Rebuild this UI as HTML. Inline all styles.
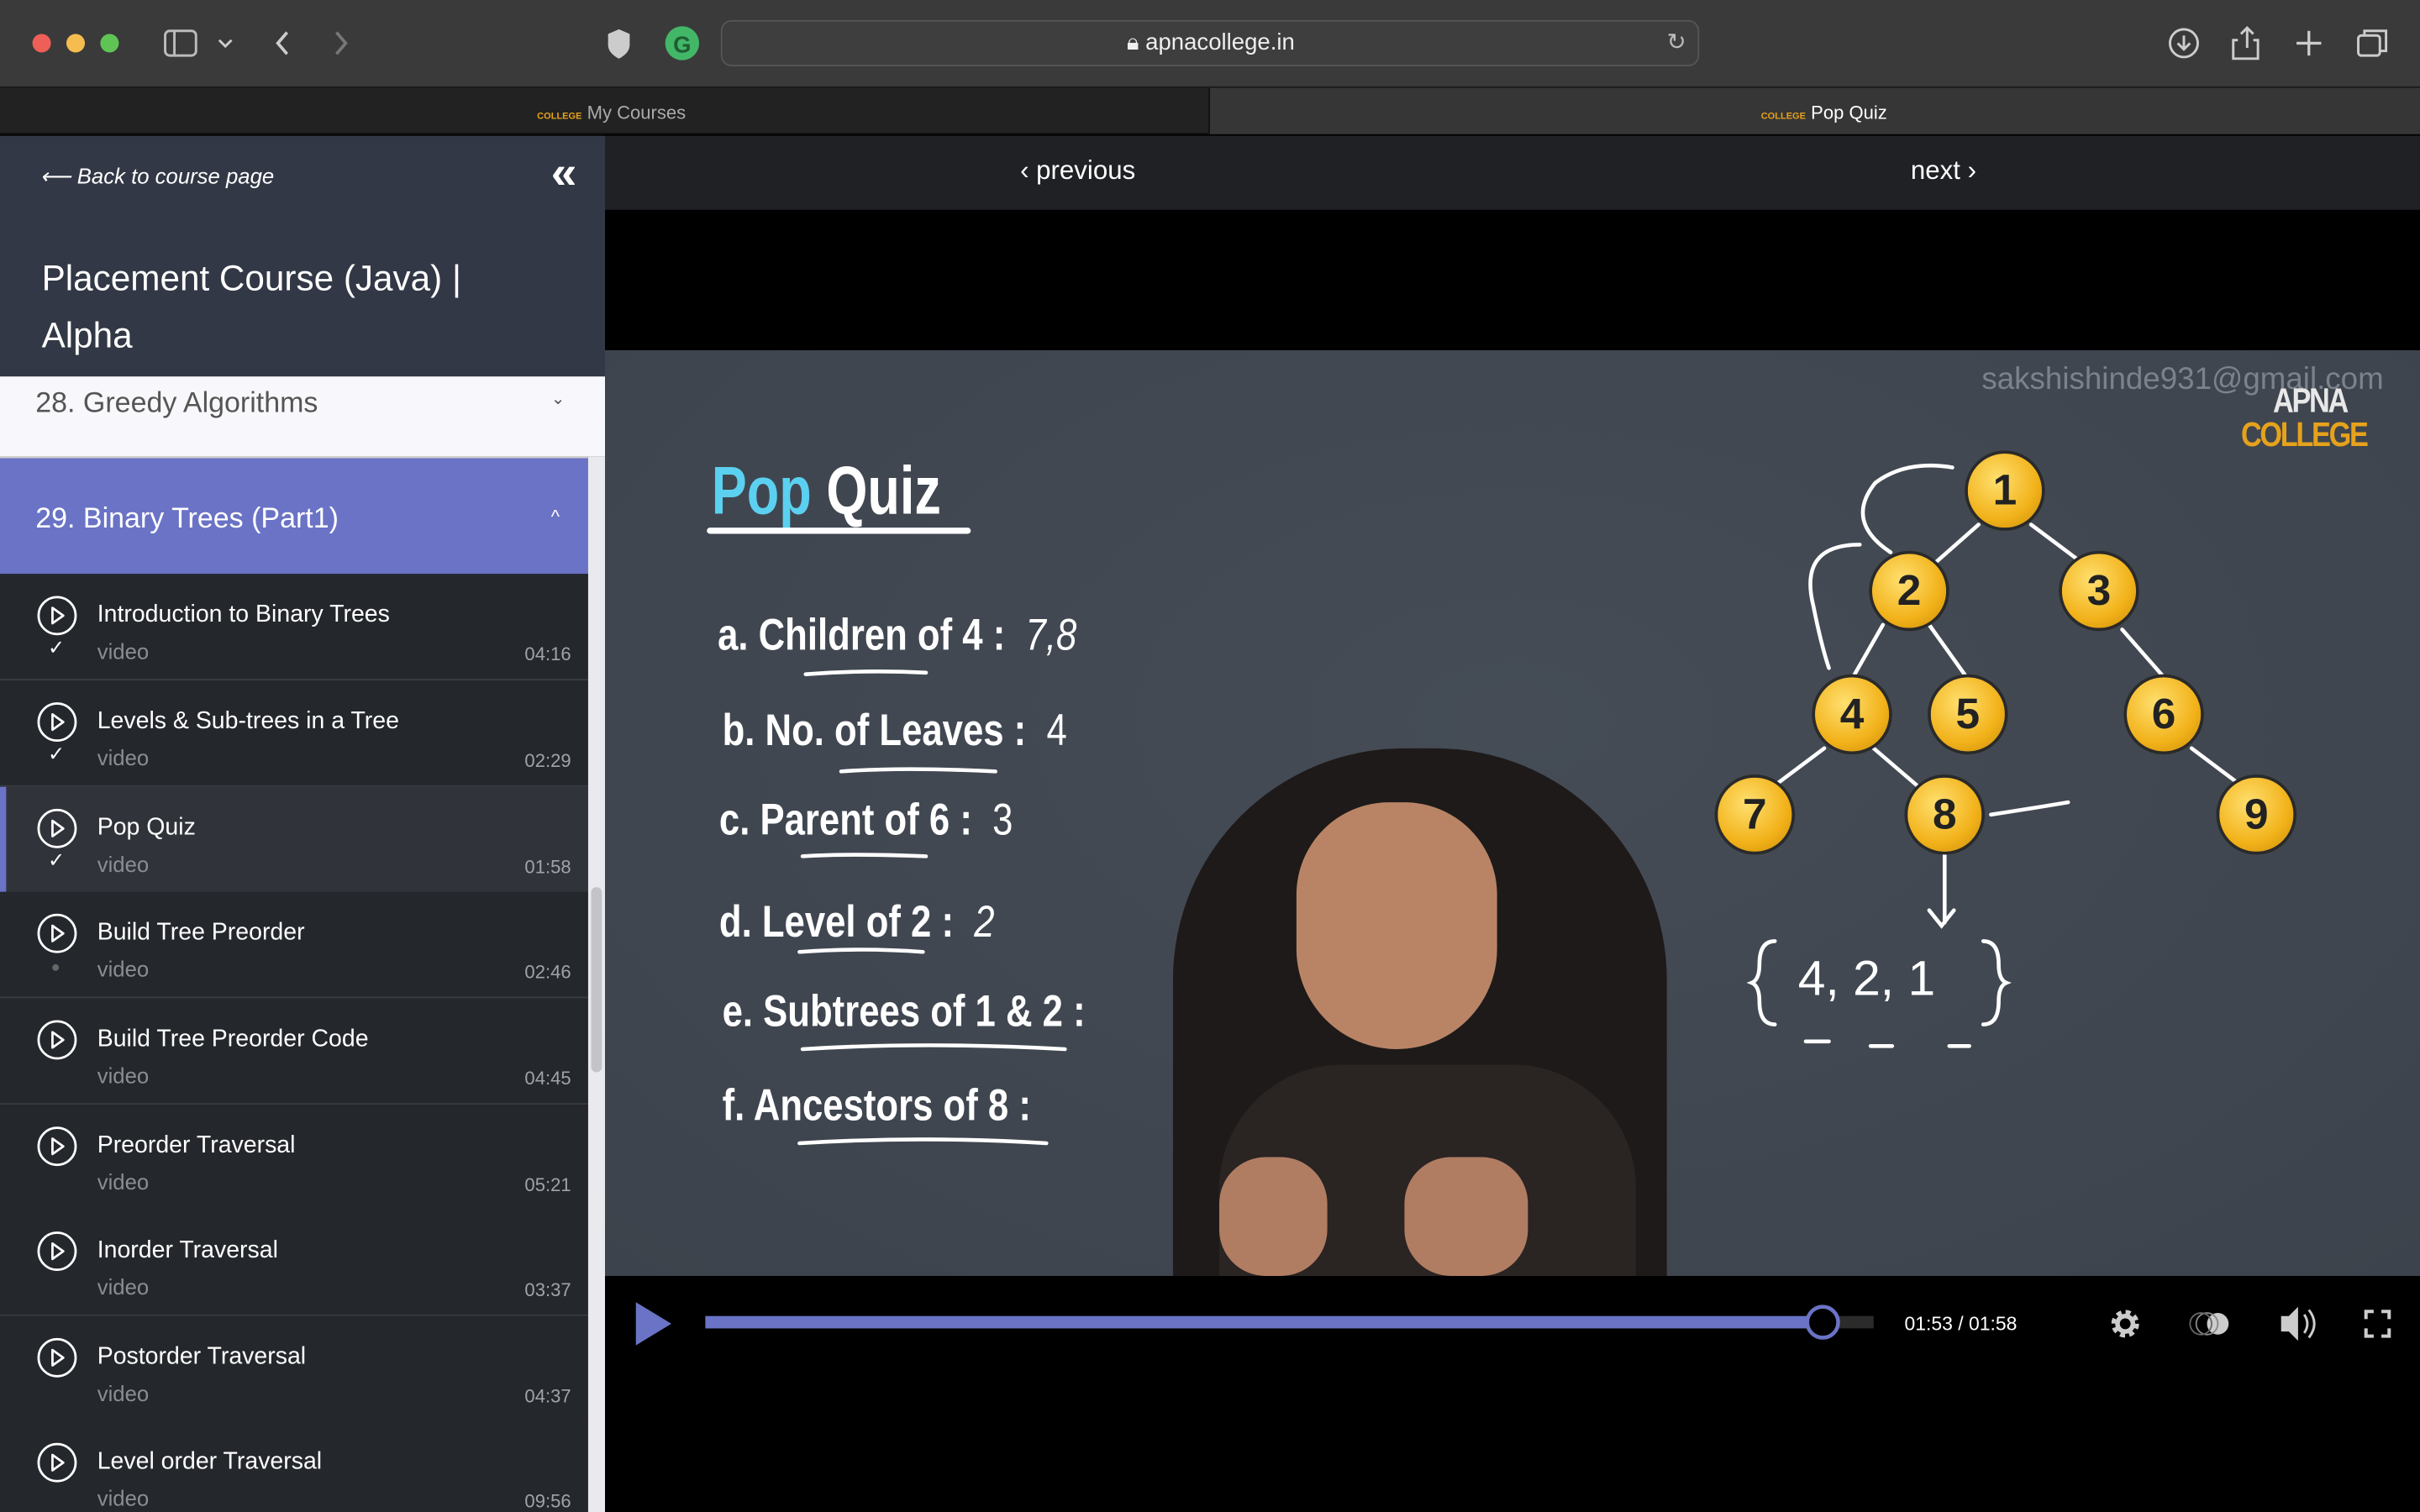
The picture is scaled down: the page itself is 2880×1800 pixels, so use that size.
<!DOCTYPE html>
<html><head><meta charset="utf-8"><style>
*{margin:0;padding:0;box-sizing:border-box}
html,body{width:2880px;height:1800px;overflow:hidden;background:#000}
#w{width:1568px;height:980px;transform:scale(1.836735);transform-origin:0 0;position:relative;font-family:"Liberation Sans",sans-serif;background:#000;overflow:hidden}
.a{position:absolute}
.item{position:absolute;left:0;width:381px;height:68.6px;background:#24272c;border-bottom:1px solid #3a3d44;color:#fff}
.item .t{position:absolute;left:63px;top:18px;font-size:15.5px}
.item .v{position:absolute;left:63px;top:42px;font-size:14px;color:#8a8d93}
.item .d{position:absolute;right:11px;top:45px;font-size:12px;color:#a0a3a8}
.item svg{position:absolute;left:23px;top:14px}
.item .ck{position:absolute;left:31px;top:40px;font-size:13px;color:#fff}
.vt{font-family:"Liberation Sans",sans-serif;font-weight:bold;color:#fff;font-size:29px;position:absolute;transform:scaleX(0.82);transform-origin:0 0;white-space:nowrap}
.node{position:absolute;width:52px;height:52px;border-radius:50%;background:radial-gradient(circle at 40% 35%,#ffe070,#f2b21a 60%,#c98a08);border:2px solid #2a2a2a;font:bold 28px "Liberation Sans",sans-serif;color:#222;text-align:center;line-height:48px}
</style></head><body><div id="w">
<div class="a" style="left:0;top:0;width:1568px;height:57px;background:#3a3a3a;border-bottom:1px solid #1a1a1a"></div>
<div class="a" style="left:21px;top:22px;width:12px;height:12px;border-radius:50%;background:#ee5f57"></div>
<div class="a" style="left:43px;top:22px;width:12px;height:12px;border-radius:50%;background:#f5bd4f"></div>
<div class="a" style="left:65px;top:22px;width:12px;height:12px;border-radius:50%;background:#5fc454"></div>
<svg class="a" style="left:100px;top:14px" width="440" height="30" viewBox="0 0 440 30">
<rect x="7" y="6" width="20" height="16" rx="3" fill="none" stroke="#bbb" stroke-width="1.6"/><line x1="13" y1="6" x2="13" y2="22" stroke="#bbb" stroke-width="1.6"/>
<path d="M42 12l4 4 4-4" fill="none" stroke="#ccc" stroke-width="1.6"/>
<path d="M86 7l-6 7 6 7" fill="none" stroke="#ccc" stroke-width="2"/>
<path d="M118 7l6 7-6 7" fill="none" stroke="#777" stroke-width="2"/>
<path d="M301 5l7 3v7c0 4-3 7-7 9-4-2-7-5-7-9V8z" fill="#ccc"/>
<circle cx="342" cy="14" r="11" fill="#43b768"/><text x="342" y="20" font-size="15" font-weight="bold" fill="#1e5e33" text-anchor="middle" font-family="Liberation Sans">G</text>
</svg>
<div class="a" style="left:467px;top:13px;width:634px;height:30px;border-radius:7px;background:#3e3e3e;border:1px solid #555"></div>
<div class="a" style="left:730px;top:19px;font-size:15px;color:#eee">🔒︎ apnacollege.in</div>
<div class="a" style="left:1080px;top:18px;font-size:15px;color:#bbb">↻</div>
<svg class="a" style="left:1400px;top:14px" width="160" height="30" viewBox="0 0 160 30">
<circle cx="15" cy="14" r="9" fill="none" stroke="#ccc" stroke-width="1.6"/><path d="M15 9v9M11 14l4 4 4-4" fill="none" stroke="#ccc" stroke-width="1.6"/>
<path d="M50 12h-3v12h16V12h-3M56 4v13M52 8l4-4 4 4" fill="none" stroke="#ccc" stroke-width="1.6"/>
<path d="M96 6v16M88 14h16" stroke="#ccc" stroke-width="1.8"/>
<rect x="128" y="9" width="14" height="13" rx="2" fill="none" stroke="#ccc" stroke-width="1.6"/><path d="M132 9V6h14v13h-4" fill="none" stroke="#ccc" stroke-width="1.6"/>
</svg>
<div class="a" style="left:0;top:57px;width:783px;height:30px;background:#222;border-bottom:1px solid #111"></div>
<div class="a" style="left:783px;top:57px;width:785px;height:30px;background:#363636;border-left:1px solid #111"></div>
<div class="a" style="left:348px;top:66px;font-size:12px;color:#aaa"><span style="color:#e6a21c;font-size:6px;font-weight:bold">COLLEGE</span> My Courses</div>
<div class="a" style="left:1141px;top:66px;font-size:12px;color:#fff"><span style="color:#e6a21c;font-size:6px;font-weight:bold">COLLEGE</span> Pop Quiz</div>
<div class="a" style="left:0;top:88px;width:392px;height:156px;background:#323845"></div>
<div class="a" style="left:26px;top:106px;font-size:14px;color:#fff;font-style:italic">⟵ Back to course page</div>
<div class="a" style="left:357px;top:98px;font-size:30px;color:#fff;font-weight:bold;line-height:30px">«</div>
<div class="a" style="left:27px;top:162px;font-size:23px;color:#fff;line-height:37px">Placement Course (Java) |<br>Alpha</div>
<div class="a" style="left:0;top:244px;width:392px;height:52px;background:#f8f8fc"></div>
<div class="a" style="left:23px;top:250px;font-size:18.5px;color:#555">28. Greedy Algorithms</div>
<div class="a" style="left:357px;top:252px;font-size:11px;color:#555">⌄</div>
<div class="a" style="left:0;top:296px;width:381px;height:1px;background:#ccc"></div>
<div class="a" style="left:0;top:297px;width:381px;height:75px;background:#6a73c5"></div>
<div class="a" style="left:23px;top:325px;font-size:18.5px;color:#fff">29. Binary Trees (Part1)</div>
<div class="a" style="left:357px;top:328px;font-size:12px;color:#fff">^</div>
<div class="a" style="left:381px;top:296px;width:11px;height:684px;background:#e9e9ee"></div>
<div class="a" style="left:383px;top:575px;width:7px;height:120px;background:#c4c4c8;border-radius:4px"></div>
<div class="item" style="top:372px"><svg width="28" height="28"><circle cx="14" cy="13" r="12" fill="none" stroke="#fff" stroke-width="1.5"/><path d="M11 8l7 5-7 5z" fill="none" stroke="#fff" stroke-width="1.5" stroke-linejoin="round"/></svg><div class="t">Introduction to Binary Trees</div><div class="v">video</div><div class="ck">✓</div><div class="d">04:16</div></div>
<div class="item" style="top:441px"><svg width="28" height="28"><circle cx="14" cy="13" r="12" fill="none" stroke="#fff" stroke-width="1.5"/><path d="M11 8l7 5-7 5z" fill="none" stroke="#fff" stroke-width="1.5" stroke-linejoin="round"/></svg><div class="t">Levels &amp; Sub-trees in a Tree</div><div class="v">video</div><div class="ck">✓</div><div class="d">02:29</div></div>
<div class="item" style="top:510px;background:#30333a;border-left:4px solid #6a73c5"><svg width="28" height="28" style="left:19px"><circle cx="14" cy="13" r="12" fill="none" stroke="#fff" stroke-width="1.5"/><path d="M11 8l7 5-7 5z" fill="none" stroke="#fff" stroke-width="1.5" stroke-linejoin="round"/></svg><div class="t" style="left:59px">Pop Quiz</div><div class="v" style="left:59px">video</div><div class="ck" style="left:27px">✓</div><div class="d">01:58</div></div>
<div class="item" style="top:578px"><svg width="28" height="28"><circle cx="14" cy="13" r="12" fill="none" stroke="#fff" stroke-width="1.5"/><path d="M11 8l7 5-7 5z" fill="none" stroke="#fff" stroke-width="1.5" stroke-linejoin="round"/></svg><div class="t">Build Tree Preorder</div><div class="v">video</div><div class="ck" style="color:#666;font-size:10px;left:33px;top:44px">●</div><div class="d">02:46</div></div>
<div class="item" style="top:647px"><svg width="28" height="28"><circle cx="14" cy="13" r="12" fill="none" stroke="#fff" stroke-width="1.5"/><path d="M11 8l7 5-7 5z" fill="none" stroke="#fff" stroke-width="1.5" stroke-linejoin="round"/></svg><div class="t">Build Tree Preorder Code</div><div class="v">video</div><div class="d">04:45</div></div>
<div class="item" style="top:716px"><svg width="28" height="28"><circle cx="14" cy="13" r="12" fill="none" stroke="#fff" stroke-width="1.5"/><path d="M11 8l7 5-7 5z" fill="none" stroke="#fff" stroke-width="1.5" stroke-linejoin="round"/></svg><div class="t">Preorder Traversal</div><div class="v">video</div><div class="d">05:21</div></div>
<div class="item" style="top:784px"><svg width="28" height="28"><circle cx="14" cy="13" r="12" fill="none" stroke="#fff" stroke-width="1.5"/><path d="M11 8l7 5-7 5z" fill="none" stroke="#fff" stroke-width="1.5" stroke-linejoin="round"/></svg><div class="t">Inorder Traversal</div><div class="v">video</div><div class="d">03:37</div></div>
<div class="item" style="top:853px"><svg width="28" height="28"><circle cx="14" cy="13" r="12" fill="none" stroke="#fff" stroke-width="1.5"/><path d="M11 8l7 5-7 5z" fill="none" stroke="#fff" stroke-width="1.5" stroke-linejoin="round"/></svg><div class="t">Postorder Traversal</div><div class="v">video</div><div class="d">04:37</div></div>
<div class="item" style="top:921px"><svg width="28" height="28"><circle cx="14" cy="13" r="12" fill="none" stroke="#fff" stroke-width="1.5"/><path d="M11 8l7 5-7 5z" fill="none" stroke="#fff" stroke-width="1.5" stroke-linejoin="round"/></svg><div class="t">Level order Traversal</div><div class="v">video</div><div class="d">09:56</div></div>
<div class="a" style="left:392px;top:88px;width:1176px;height:48px;background:#1f2125"></div>
<div class="a" style="left:661px;top:101px;font-size:17px;color:#fff">‹ previous</div>
<div class="a" style="left:1238px;top:101px;font-size:17px;color:#fff">next ›</div>
<div class="a" style="left:392px;top:227px;width:1176px;height:600px;background:radial-gradient(ellipse at 50% 40%,#454c56,#3d434c)"></div>
<div class="a" style="left:1284px;top:235px;font-size:20px;color:#7c828b">sakshishinde931@gmail.com</div>
<div class="a" style="left:1452px;top:249px;font:bold 22px/22px 'Liberation Sans',sans-serif;color:#e8e8e8;text-align:center;letter-spacing:-1.5px;transform:scaleX(0.85);transform-origin:0 0">&nbsp;&nbsp;APNA<br><span style="color:#e6a21c">COLLEGE</span></div>
<div class="vt" style="left:461px;top:294px;font-size:44px;transform:scaleX(0.78)"><span style="color:#5bd0f0">Pop</span> Quiz</div>
<div class="a" style="left:458px;top:342px;width:171px;height:4px;background:#fff;border-radius:2px"></div>
<div class="vt" style="left:465px;top:396px">a. Children of 4 :&nbsp;&nbsp;<span style="font-weight:normal;font-style:italic">7,8</span></div>
<div class="vt" style="left:468px;top:458px">b. No. of Leaves :&nbsp;&nbsp;<span style="font-weight:normal">4</span></div>
<div class="vt" style="left:466px;top:516px">c. Parent of 6 :&nbsp;&nbsp;<span style="font-weight:normal">3</span></div>
<div class="vt" style="left:466px;top:582px">d. Level of 2 :&nbsp;&nbsp;<span style="font-weight:normal;font-style:italic">2</span></div>
<div class="vt" style="left:468px;top:640px">e. Subtrees of 1 &amp; 2 :</div>
<div class="vt" style="left:468px;top:701px">f. Ancestors of 8 :</div>
<svg class="a" style="left:392px;top:227px" width="1176" height="600" viewBox="392 227 1176 600">
<g stroke="#fff" stroke-width="2.5" fill="none" stroke-linecap="round">
<path d="M522 437q40 -3 78 -1M545 500q40 -3 100 0M520 555q30 -2 80 0M518 617q40-3 80 0M520 680q80-5 170 0M518 741q80-5 160 0"/>
<path d="M1282 340l-42 37M1316 340l40 30M1220 405l-20 35M1250 405l25 35M1375 408l28 32M1182 485l-40 30M1214 485l35 30M1420 485l40 30"/>
<path d="M1225 358q-30-20-10-45q20-15 50-10M1205 353q-40 0-30 40q5 25 10 40M1340 520q-30 5-50 8M1260 550v48M1250 590l8 10 8-10"/>
<path d="M1150 610q-10 0-10 15q0 10-5 12q5 2 5 12q0 15 10 15M1285 610q10 0 10 15q0 10 5 12q-5 2-5 12q0 15-10 15M1170 675h15M1212 678h14M1263 678h13"/>
</g>
<text x="1165" y="645" fill="#fff" font-size="32" font-family="Liberation Sans">4, 2, 1</text>
</svg>
<div class="node" style="left:1273px;top:292px">1</div>
<div class="node" style="left:1211px;top:357px">2</div>
<div class="node" style="left:1334px;top:357px">3</div>
<div class="node" style="left:1174px;top:437px">4</div>
<div class="node" style="left:1249px;top:437px">5</div>
<div class="node" style="left:1376px;top:437px">6</div>
<div class="node" style="left:1111px;top:502px">7</div>
<div class="node" style="left:1234px;top:502px">8</div>
<div class="node" style="left:1436px;top:502px">9</div>
<div class="a" style="left:760px;top:485px;width:320px;height:342px;background:#1e1a19;border-radius:150px 150px 0 0"></div>
<div class="a" style="left:840px;top:520px;width:130px;height:160px;background:#b98466;border-radius:60px 60px 65px 65px"></div>
<div class="a" style="left:790px;top:690px;width:270px;height:137px;background:#2a2423;border-radius:80px 80px 0 0"></div>
<div class="a" style="left:790px;top:750px;width:70px;height:77px;background:#b07d62;border-radius:30px"></div>
<div class="a" style="left:910px;top:750px;width:80px;height:77px;background:#b07d62;border-radius:30px"></div>
<svg class="a" style="left:392px;top:827px" width="1176" height="60" viewBox="392 827 1176 60">
<path d="M412 844l23 14-23 14z" fill="#6a73c5"/>
<rect x="457" y="853" width="757" height="8" fill="#2b2b2b"/>
<rect x="457" y="853" width="724" height="8" fill="#6a73c5"/>
<circle cx="1181" cy="857" r="10" fill="#000" stroke="#6a73c5" stroke-width="2.5"/>
<text x="1234" y="862" fill="#fff" font-size="12.5" font-family="Liberation Sans">01:53 / 01:58</text>
<circle cx="1377" cy="858" r="7" fill="none" stroke="#ccc" stroke-width="4" stroke-dasharray="3 2.5"/><circle cx="1377" cy="858" r="5" fill="none" stroke="#ccc" stroke-width="3"/>
<circle cx="1437" cy="858" r="7" fill="#ccc"/><circle cx="1430" cy="858" r="7" fill="none" stroke="#888" stroke-width="1"/><circle cx="1426" cy="858" r="7" fill="none" stroke="#666" stroke-width="1"/>
<path d="M1478 853h5l6-6v22l-6-6h-5z" fill="#ccc"/><path d="M1493 852q4 6 0 12M1496 849q7 9 0 18" stroke="#ccc" stroke-width="1.6" fill="none"/>
<path d="M1533 855v-5h5M1543 850h5v5M1548 861v5h-5M1538 866h-5v-5" stroke="#ccc" stroke-width="2.2" fill="none"/>
</svg>
</div></body></html>
